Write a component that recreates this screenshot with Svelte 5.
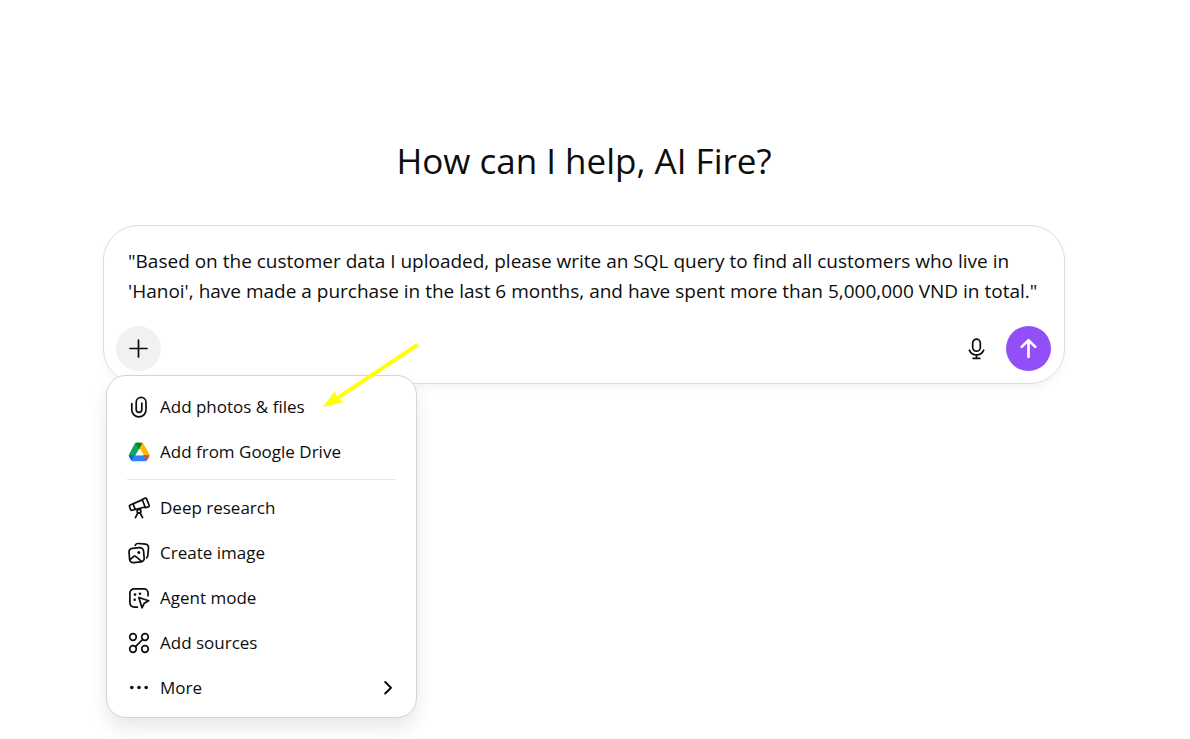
<script>
    let prompt = $state(`"Based on the customer data I uploaded, please write an SQL query to find all customers who live in 'Hanoi', have made a purchase in the last 6 months, and have spent more than 5,000,000 VND in total."`);
    let menuOpen = $state(true);

    const uploads = [
        { icon: 'clip', label: 'Add photos & files' },
        { icon: 'drive', label: 'Add from Google Drive' }
    ];

    const tools = [
        { icon: 'telescope', label: 'Deep research' },
        { icon: 'image', label: 'Create image' },
        { icon: 'agent', label: 'Agent mode' },
        { icon: 'sources', label: 'Add sources' },
        { icon: 'more', label: 'More', submenu: true }
    ];
</script>

{#snippet icon(name)}
    <svg class="icon" viewBox="0 0 22 22" aria-hidden="true">
        {#if name === 'clip'}
            <path d="M3.8 7.5v6.3a7.1 7.1 0 0 0 14.2 0V6.2a4.9 4.9 0 0 0-9.8 0v7.4a2.8 2.8 0 0 0 5.6 0V7" />
        {:else if name === 'drive'}
            <g stroke="none">
                <path fill="#0da960" d="M7.5 1.8h3.6L13 5.2 4.2 20.3 1.1 15.2a2 2 0 0 1 0-1.9L6.8 2.5z" />
                <path fill="#ffba00" d="M9 1.8h4.9a2 2 0 0 1 1.6.9l5.7 10.1a2 2 0 0 1 .2 1.1h-5.7L11 6.3z" />
                <path fill="#2d82fc" d="M6.5 14.3h14.9a2 2 0 0 1-.2.9l-2.2 4a2 2 0 0 1-1.7 1H4.9a2 2 0 0 1-1.7-.9z" />
                <path fill="#0066da" d="M.8 14.3h5.8l-3.4 5.1-2.2-3.9a2 2 0 0 1-.2-1.2z" />
                <path fill="#ea4335" d="M15.7 14.3h5.7a2 2 0 0 1-.3 1.2l-2.2 3.9z" />
                <path fill="#00832d" d="M7.5 2.1a2 2 0 0 1 1-.3h5a2 2 0 0 1 1 .3L11 8.2z" />
                <path fill="#fff" d="m11 8.2 3.6 6.1H7.4z" />
            </g>
        {:else if name === 'telescope'}
            <path d="m14.200 2.500 2.600-1.300a1.300 1.300 0 0 1 1.800.7l2.500 6.300a1.300 1.300 0 0 1-.8 1.700l-2.900.9z" />
            <path d="M14.200 2.900 2.200 8a1.300 1.300 0 0 0-.7 1.600l1 2.900a1.300 1.300 0 0 0 1.600.8l13-3.300M5.300 7.200l1.700 4.800" />
            <circle cx="11" cy="14.3" r="1.900" />
            <path d="m9.900 16-2.500 4.600M12.100 16l2.500 4.600" />
        {:else if name === 'image'}
            <rect x="1.3" y="6" width="14.600" height="14.300" rx="3.6" transform="rotate(-5 8.6 13.2)" />
            <path d="M7.200 3.300a3.200 3.200 0 0 1 3.200-1.800l7.200.7a3.200 3.200 0 0 1 2.900 3.500l-.7 7.800a3.200 3.200 0 0 1-1.200 2.300M2.200 17.400l3-2.600a2.200 2.200 0 0 1 2.800-.1l5.600 4.600" />
            <circle class="dot" cx="10.8" cy="10.6" r="1.5" />
        {:else if name === 'agent'}
            <path d="M9.4 20.1H6.1a4.2 4.2 0 0 1-4.2-4.2V6.1a4.2 4.2 0 0 1 4.2-4.2h9.8a4.2 4.2 0 0 1 4.2 4.2v2.6" />
            <path d="m10.800 10.500 9.900 3.200-4.400 2.500-2.300 4.600z" />
            <g class="dot">
                <circle cx="7" cy="7.6" r="1.3" />
                <circle cx="12" cy="6.7" r="1.3" />
                <circle cx="6.7" cy="12.8" r="1.3" />
            </g>
        {:else if name === 'sources'}
            <circle cx="5" cy="5" r="3.3" />
            <circle cx="17" cy="5" r="3.3" />
            <circle cx="5" cy="17" r="3.3" />
            <circle cx="17" cy="17" r="3.3" />
            <path d="m7.5 14.6 7.1-7.1" />
        {:else if name === 'more'}
            <g class="dot">
                <circle cx="3.8" cy="10.5" r="1.8" />
                <circle cx="11" cy="10.5" r="1.8" />
                <circle cx="18.2" cy="10.5" r="1.8" />
            </g>
        {:else if name === 'plus'}
            <path d="M10.5 2v17M2 10.5h17" />
        {:else if name === 'mic'}
            <rect x="6.7" y="1.2" width="7.6" height="12" rx="3.8" />
            <path d="M3.3 12.2a7.8 7.8 0 0 0 14.4 0M10.5 16.9v3.4M7.1 20.3h6.8" />
        {:else if name === 'send'}
            <path stroke-width="2.6" d="M10.5 19V2.5M3.7 8.9l6.8-6.6 6.8 6.6" />
        {:else if name === 'chevron'}
            <path stroke-width="2" d="m8.2 5 5.8 5.7-5.8 5.8" />
        {/if}
    </svg>
{/snippet}

{#snippet menuItem(item)}
    <button type="button" class="item" role="menuitem">
        {@render icon(item.icon)}
        <span class="label">{item.label}</span>
        {#if item.submenu}
            {@render icon('chevron')}
        {/if}
    </button>
{/snippet}

<main>
    <h1>How can I help, AI Fire?</h1>

    <form class="composer" onsubmit={(e) => e.preventDefault()}>
        <textarea rows="2" aria-label="Message" spellcheck="false" bind:value={prompt}></textarea>

        <div class="toolbar">
            <div class="attach">
                <button type="button" class="round plus" aria-label="Add files and more" aria-expanded={menuOpen} onclick={() => (menuOpen = !menuOpen)}>
                    {@render icon('plus')}
                </button>

                {#if menuOpen}
                    <div class="menu" role="menu">
                        {#each uploads as item}
                            {@render menuItem(item)}
                        {/each}
                        <hr />
                        {#each tools as item}
                            {@render menuItem(item)}
                        {/each}
                    </div>
                    <svg class="pointer" viewBox="0 0 96 66" aria-hidden="true">
                        <path d="M93.5 2.5 16 54" fill="none" stroke="#ffff0a" stroke-width="4" stroke-linecap="round" />
                        <path d="M0 64 11.5 48.5 14 53 20 59.5z" fill="#ffff0a" />
                    </svg>
                {/if}
            </div>

            <div class="actions">
                <button type="button" class="round" aria-label="Dictate">{@render icon('mic')}</button>
                <button type="submit" class="round send" aria-label="Send">{@render icon('send')}</button>
            </div>
        </div>
    </form>
</main>

<style>
    :global(body) {
        margin: 0;
        background: #fff;
        color: #0d0d0d;
        font-family: "Segoe UI", "Open Sans", "Noto Sans", sans-serif;
    }

    main {
        display: flex;
        flex-direction: column;
        align-items: center;
        box-sizing: border-box;
        min-height: 100vh;
        padding: 138px 125px 0 103px;
    }

    h1 {
        margin: 0 0 41px;
        font-size: 35px;
        line-height: 46px;
        font-weight: 400;
    }

    .composer {
        box-sizing: border-box;
        width: 100%;
        max-width: 962px;
        padding: 20px 13px 12px 12px;
        border: 1px solid #dcdcdc;
        border-radius: 35px;
        box-shadow: 0 5px 6px rgba(0, 0, 0, 0.04);
    }

    textarea {
        display: block;
        box-sizing: border-box;
        width: 100%;
        margin: 0 0 20px;
        padding: 0 12px;
        border: 0;
        outline: 0;
        resize: none;
        overflow: hidden;
        background: transparent;
        color: inherit;
        font-family: inherit;
        font-size: 19px;
        line-height: 30px;
    }

    .toolbar,
    .actions {
        display: flex;
        align-items: center;
    }

    .toolbar {
        justify-content: space-between;
    }

    .actions {
        gap: 7px;
    }

    .attach {
        position: relative;
    }

    button {
        padding: 0;
        border: 0;
        background: none;
        color: inherit;
        font-family: inherit;
        cursor: pointer;
    }

    .round {
        display: flex;
        align-items: center;
        justify-content: center;
        width: 45px;
        height: 45px;
        border-radius: 50%;
    }

    .plus {
        background: #f1f1f1;
    }

    .send {
        background: #924ff7;
        color: #fff;
    }

    .icon {
        flex: none;
        width: 22px;
        height: 22px;
        fill: none;
        stroke: currentColor;
        stroke-width: 1.7;
        stroke-linecap: round;
        stroke-linejoin: round;
    }

    .dot {
        fill: currentColor;
        stroke: none;
    }

    .menu {
        position: absolute;
        z-index: 1;
        top: 49px;
        left: -10px;
        box-sizing: border-box;
        width: 311px;
        padding: 8px 8px 7px;
        border: 1px solid #d4d4d4;
        border-radius: 20px;
        background: #fff;
        box-shadow: 0 10px 18px rgba(0, 0, 0, 0.09);
    }

    .item {
        display: flex;
        align-items: center;
        gap: 10px;
        width: 100%;
        height: 45px;
        padding: 0 9px 0 13px;
        border-radius: 12px;
        font-size: 17px;
        text-align: left;
    }

    .item:hover {
        background: #f5f5f5;
    }

    .label {
        flex: 1;
    }

    hr {
        height: 1px;
        margin: 5px 12px;
        border: 0;
        background: #e6e6e6;
    }

    .pointer {
        position: absolute;
        z-index: 2;
        top: 17px;
        left: 207px;
        width: 96px;
        height: 66px;
        pointer-events: none;
    }
</style>
